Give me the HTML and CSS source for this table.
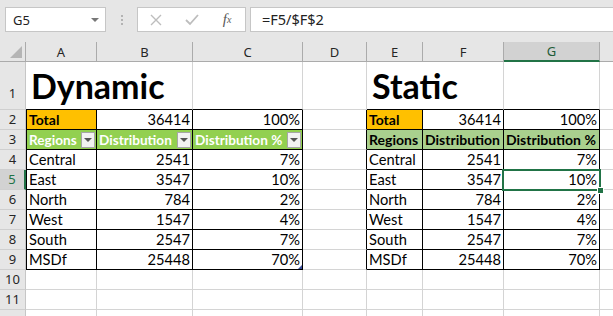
FILE: index.html
```html
<!DOCTYPE html>
<html lang="en">
<head>
  <meta charset="UTF-8">
  <title>Dynamic vs Static</title>
  <link rel="stylesheet" href="styles.css">
</head>
<body>

  <div class="fbar">
    <div class="namebox">
      <span>G5</span>
      <span class="dd"></span>
    </div>
    <div class="grip"><i></i><i></i><i></i></div>
    <div class="fbtns">
      <span class="ico">
        <svg width="12" height="12" viewBox="0 0 12 12"><path d="M1 1 L11 11 M11 1 L1 11" stroke="#bdbdbd" stroke-width="1.4" fill="none"/></svg>
      </span>
      <span class="ico">
        <svg width="14" height="12" viewBox="0 0 14 12"><path d="M1 6 L5 10 L13 1" stroke="#bdbdbd" stroke-width="1.8" fill="none"/></svg>
      </span>
      <span class="ico fx">f<sub>x</sub></span>
    </div>
    <div class="finput">=F5/$F$2</div>
  </div>

  <table class="sheet">
    <colgroup>
      <col style="width:26px"><col style="width:71px"><col style="width:96px"><col style="width:110px">
      <col style="width:64px"><col style="width:56px"><col style="width:81px"><col style="width:96px"><col style="width:63px">
    </colgroup>
    <tr class="hdr">
      <th class="corner"><span class="tri"></span></th>
      <th class="ch">A</th><th class="ch">B</th><th class="ch">C</th><th class="ch">D</th>
      <th class="ch">E</th><th class="ch">F</th><th class="ch on">G</th><th class="ch"></th>
    </tr>
    <tr class="big">
      <th class="rh first">1</th>
      <td class="title bb" colspan="2">Dynamic</td><td class="bb"></td><td></td>
      <td class="title bb" colspan="2">Static</td><td class="bb"></td><td></td>
    </tr>
    <tr>
      <th class="rh">2</th>
      <td class="box bl tot">Total</td><td class="box n">36414</td><td class="box n">100%</td><td class="br"></td>
      <td class="box tot">Total</td><td class="box n">36414</td><td class="box n">100%</td><td></td>
    </tr>
    <tr>
      <th class="rh">3</th>
      <td class="box bl dyn"><div class="hd">Regions<span class="fb"></span></div></td>
      <td class="box dyn"><div class="hd">Distribution<span class="fb"></span></div></td>
      <td class="box dyn"><div class="hd">Distribution %<span class="fb"></span></div></td>
      <td class="br"></td>
      <td class="box sta">Regions</td><td class="box sta">Distribution</td><td class="box sta">Distribution %</td><td></td>
    </tr>
    <tr>
      <th class="rh">4</th>
      <td class="box bl">Central</td><td class="box n">2541</td><td class="box n">7%</td><td class="br"></td>
      <td class="box">Central</td><td class="box n">2541</td><td class="box n">7%</td><td></td>
    </tr>
    <tr>
      <th class="rh on">5</th>
      <td class="box bl">East</td><td class="box n">3547</td><td class="box n">10%</td><td class="br"></td>
      <td class="box">East</td><td class="box n">3547</td><td class="box n active">10%<span class="selbox"><span class="handle"></span></span></td><td></td>
    </tr>
    <tr>
      <th class="rh">6</th>
      <td class="box bl">North</td><td class="box n">784</td><td class="box n">2%</td><td class="br"></td>
      <td class="box">North</td><td class="box n">784</td><td class="box n">2%</td><td></td>
    </tr>
    <tr>
      <th class="rh">7</th>
      <td class="box bl">West</td><td class="box n">1547</td><td class="box n">4%</td><td class="br"></td>
      <td class="box">West</td><td class="box n">1547</td><td class="box n">4%</td><td></td>
    </tr>
    <tr>
      <th class="rh">8</th>
      <td class="box bl">South</td><td class="box n">2547</td><td class="box n">7%</td><td class="br"></td>
      <td class="box">South</td><td class="box n">2547</td><td class="box n">7%</td><td></td>
    </tr>
    <tr>
      <th class="rh">9</th>
      <td class="box bl">MSDf</td><td class="box n">25448</td><td class="box n grow">70%<span class="resize"></span></td><td class="br"></td>
      <td class="box">MSDf</td><td class="box n">25448</td><td class="box n">70%</td><td></td>
    </tr>
    <tr>
      <th class="rh">10</th><td></td><td></td><td></td><td></td><td></td><td></td><td></td><td></td>
    </tr>
    <tr>
      <th class="rh">11</th><td></td><td></td><td></td><td></td><td></td><td></td><td></td><td></td>
    </tr>
    <tr>
      <th class="rh"></th><td></td><td></td><td></td><td></td><td></td><td></td><td></td><td></td>
    </tr>
  </table>

</body>
</html>
```

FILE: styles.css
```css
* {
  box-sizing: border-box;
}

body {
  margin: 0;
  width: 613px;
  height: 316px;
  overflow: hidden;
  background: #fff;
  font-family: 'Lato', sans-serif;
}

/* formula bar */
.fbar {
  height: 42px;
  background: #e6e6e6;
  display: flex;
  align-items: flex-start;
  padding: 7px 0 0 5px;
  font-family: 'Noto Sans', sans-serif;
  font-size: 13px;
  color: #222;
}

.namebox {
  width: 101px;
  height: 25px;
  background: #fff;
  border: 1px solid #c6c6c6;
  display: flex;
  align-items: center;
  justify-content: space-between;
  padding: 0 6px 0 7px;
}

.dd {
  width: 0;
  height: 0;
  border-left: 4px solid transparent;
  border-right: 4px solid transparent;
  border-top: 4px solid #777;
}

.grip {
  width: 31px;
  height: 25px;
  display: flex;
  flex-direction: column;
  align-items: center;
  justify-content: center;
  gap: 2px;
}

.grip i {
  width: 2px;
  height: 2px;
  background: #b3b3b3;
}

.fbtns {
  width: 109px;
  height: 25px;
  background: #fff;
  border: 1px solid #c6c6c6;
  display: flex;
  align-items: center;
}

.ico {
  width: 36px;
  display: flex;
  justify-content: center;
  align-items: center;
}

.fx {
  font-family: 'Liberation Serif', serif;
  font-style: italic;
  font-size: 15px;
  color: #595959;
}

.fx sub {
  font-size: 10px;
  vertical-align: -1px;
}

.finput {
  flex: 1;
  margin-left: 4px;
  height: 25px;
  background: #fff;
  border: 1px solid #c6c6c6;
  border-right: none;
  padding-left: 11px;
  font-size: 14.5px;
  line-height: 23px;
}

/* grid */
.sheet {
  border-collapse: separate;
  border-spacing: 0;
  table-layout: fixed;
  width: 663px;
}

.sheet tr {
  height: 20px;
}

.sheet tr.big {
  height: 48px;
}

.sheet td,
.sheet th {
  padding: 0 2px;
  border-right: 1px solid #d4d4d4;
  border-bottom: 1px solid #d4d4d4;
  font-size: 14.67px;
  line-height: 18px;
  white-space: nowrap;
  overflow: hidden;
  vertical-align: bottom;
  text-align: left;
  color: #000;
}

.sheet .ch,
.sheet .rh,
.sheet .corner {
  background: #e6e6e6;
  font-family: 'Noto Sans', sans-serif;
  font-size: 13px;
  font-weight: normal;
  color: #262626;
  text-align: center;
  vertical-align: middle;
  border-right-color: #ababab;
  border-bottom-color: #ababab;
}

.sheet .rh {
  border-bottom-color: #cfcfcf;
  border-right-color: #c6c6c6;
  vertical-align: bottom;
  padding: 0 0 1px;
}

.sheet .rh.first {
  padding-bottom: 7px;
}

.sheet .ch.on {
  background: #d2d2d2;
  color: #1e5c38;
  border-bottom: 2px solid #217346;
}

.sheet .rh.on {
  background: #d2d2d2;
  color: #217346;
  border-right: 2px solid #217346;
}

.corner {
  position: relative;
}

.tri {
  position: absolute;
  right: 3px;
  bottom: 3px;
  width: 0;
  height: 0;
  border-left: 12px solid transparent;
  border-bottom: 12px solid #b5b5b5;
}

.sheet .title {
  font-size: 34px;
  font-weight: bold;
  line-height: 46px;
  padding-left: 5px;
}

.sheet .bb {
  border-bottom-color: #000;
}

.sheet .br {
  border-right-color: #000;
}

.sheet .box {
  border-right-color: #000;
  border-bottom-color: #000;
}

.sheet .bl {
  border-left: 1px solid #000;
}

.sheet .n {
  text-align: right;
}

.sheet .tot {
  background: #ffc000;
  font-weight: bold;
  font-size: 14px;
}

.sheet .dyn {
  background: #92d050;
  color: #fff;
  font-weight: bold;
  font-size: 13.6px;
  padding-right: 1px;
}

.sheet .sta {
  background: #a9d08e;
  font-weight: bold;
  font-size: 14px;
}

.hd {
  display: flex;
  justify-content: space-between;
  align-items: center;
  height: 19px;
}

.fb {
  flex: none;
  width: 14px;
  height: 16px;
  background: #f2f2f2;
  border: 1px solid #a6a6a6;
  display: flex;
  align-items: center;
  justify-content: center;
  margin-top: 1px;
}

.fb::after {
  content: '';
  border-left: 4px solid transparent;
  border-right: 4px solid transparent;
  border-top: 4px solid #555;
}

.sheet .active,
.sheet .grow {
  position: relative;
  overflow: visible;
}

.selbox {
  position: absolute;
  left: -2px;
  top: -1px;
  right: -2px;
  bottom: -2px;
  border: 2px solid #217346;
}

.handle {
  position: absolute;
  right: -5px;
  bottom: -5px;
  width: 7px;
  height: 7px;
  background: #217346;
  border: 1px solid #fff;
}

.resize {
  position: absolute;
  right: 0;
  bottom: 0;
  width: 0;
  height: 0;
  border-left: 4px solid transparent;
  border-bottom: 4px solid #3c4f9c;
}
```
